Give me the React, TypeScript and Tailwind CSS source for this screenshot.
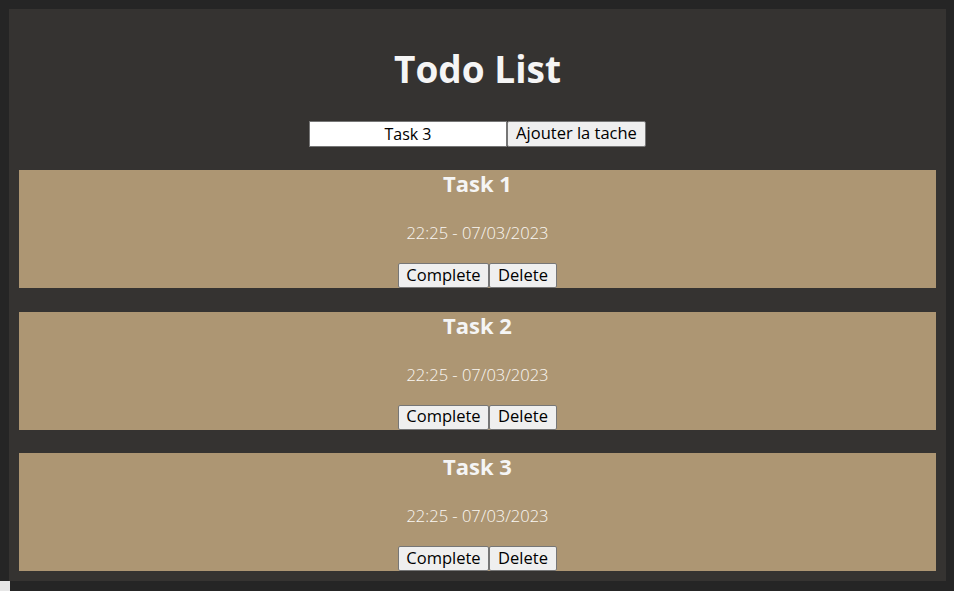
import { useState } from "react";

type Tache = { id: number; titre: string; date: string };

const TACHES_INITIALES: Tache[] = [
  { id: 1, titre: "Task 1", date: "22:25 - 07/03/2023" },
  { id: 2, titre: "Task 2", date: "22:25 - 07/03/2023" },
  { id: 3, titre: "Task 3", date: "22:25 - 07/03/2023" },
];

const btn =
  "h-[25px] bg-[#efefef] border border-[#767676] rounded-[2px] text-[16.5px] leading-none text-black flex items-center justify-center pb-[1px]";

export default function App() {
  const [taches, setTaches] = useState<Tache[]>(TACHES_INITIALES);
  const [saisie, setSaisie] = useState("Task 3");

  function ajouter(e: React.FormEvent) {
    e.preventDefault();
    if (!saisie.trim()) return;
    setTaches((prev) => [
      ...prev,
      { id: Date.now(), titre: saisie.trim(), date: "22:25 - 07/03/2023" },
    ]);
  }

  function supprimer(id: number) {
    setTaches((prev) => prev.filter((t) => t.id !== id));
  }

  return (
    <div
      className="min-h-[591px] bg-[#252525] pt-[9px] pl-[9px] pr-[8px]"
      style={{ fontFamily: '"Open Sans", "Noto Sans", sans-serif' }}
    >
      <div className="bg-[#353331] pt-[37px] px-[10px] pb-[10px]">
        <h1 className="text-center text-[37px] font-bold leading-[46px] h-[48px] text-[#f5f5f5]">
          Todo List
        </h1>

        <form onSubmit={ajouter} className="mt-[27px] flex justify-center">
          <input
            type="text"
            value={saisie}
            onChange={(e) => setSaisie(e.target.value)}
            className="w-[198px] h-[26px] bg-white border border-[#767676] text-center text-[16px] text-black outline-none"
          />
          <button type="submit" className={`${btn} w-[139px] h-[26px]`}>
            Ajouter la tache
          </button>
        </form>

        {/* liste des taches */}
        <div className="mt-[23px] flex flex-col gap-[23.5px]">
          {taches.map((t) => (
            <div key={t.id} className="h-[118px] bg-[#ad9673] flex flex-col items-center">
              <h3 className="text-[22px] font-bold leading-[27px] h-[28px] text-[#f5f5f5]">{t.titre}</h3>
              <p className="mt-[23px] text-[16.5px] font-light leading-[24px] text-[#fbf8f3]">
                {t.date}
              </p>
              <div className="mt-[18px] flex">
                <button type="button" className={`${btn} w-[91px]`}>
                  Complete
                </button>
                <button type="button" onClick={() => supprimer(t.id)} className={`${btn} w-[68px]`}>
                  Delete
                </button>
              </div>
            </div>
          ))}
        </div>
      </div>
      <div className="-ml-[9px] w-[10px] h-[10px] bg-[#e6e6e6]" />
    </div>
  );
}
